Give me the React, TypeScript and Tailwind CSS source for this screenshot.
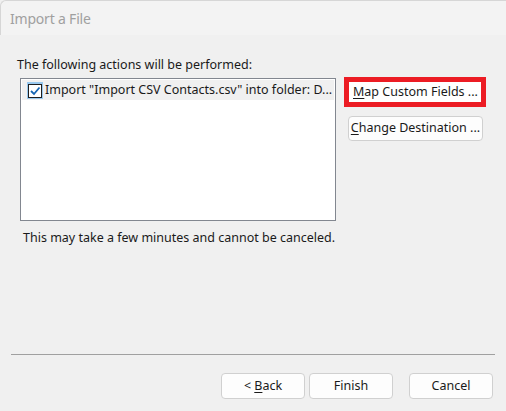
import React from "react";

const font = { fontFamily: '"Noto Sans", "Open Sans", sans-serif' };

function Check() {
  return (
    <svg width="16" height="17" viewBox="0 0 16 17" className="block shrink-0">
      <rect x="0" y="0" width="16" height="17" fill="#99c9ef" />
      <rect x="1.5" y="2.5" width="13" height="13" fill="#ffffff" stroke="#1e1e1e" strokeWidth="1" />
      <path d="M4 9 L7 12 L12.5 5.5" fill="none" stroke="#1565b3" strokeWidth="1.8" />
    </svg>
  );
}

export default function App() {
  return (
    <div
      className="w-[506px] h-[411px] bg-[#f0f0f0] flex flex-col overflow-hidden text-[12.5px] text-[#1a1a1a]"
      style={font}
    >
      <div className="h-[35px] shrink-0 bg-[#f3f3f3] pl-[9px] flex items-center text-[14px] text-[#a0a0a0] tracking-[-0.2px] rounded-tl-[6px] border-t border-l border-[#d6d6d6]">
        Import a File
      </div>
      <div className="flex pl-[17px] mt-[22px]">
        <div className="w-[318px] flex flex-col">
          <div className="h-[16px] leading-[16px] whitespace-nowrap">The following actions will be performed:</div>
          <div className="mt-[5px] ml-[3px] w-[316px] h-[143px] bg-white border border-[#828790] p-[1px]">
            <div className="flex items-center h-[20px] bg-[#f0f0f0]">
              <div className="ml-[5px]">
                <Check />
              </div>
              <span className="ml-[2px] whitespace-nowrap">Import "Import CSV Contacts.csv" into folder: D...</span>
            </div>
          </div>
          <div className="ml-[6px] mt-[9px] h-[16px] leading-[16px] whitespace-nowrap">This may take a few minutes and cannot be canceled.</div>
        </div>
        <div className="ml-[9px] mt-[20px] flex flex-col">
          <div className="w-[142px] h-[30px] border-[5px] border-[#ec1c24] bg-white flex items-center pl-[4px] whitespace-nowrap">
            <span>
              <u className="underline-offset-2">M</u>ap Custom Fields ...
            </span>
          </div>
          <button className="ml-[4px] mt-[9px] w-[135px] h-[25px] bg-[#fdfdfd] border border-[#d0d0d0] rounded-[4px] flex items-center justify-center whitespace-nowrap">
            <span>
              <u className="underline-offset-2">C</u>hange Destination ...
            </span>
          </button>
        </div>
      </div>
      <div className="flex-1" />
      <div className="mx-[11px] h-[1px] bg-[#a0a0a0] shrink-0" />
      <div className="flex mt-[18px] mb-[12px] pr-[13px] justify-end shrink-0">
        <button className="w-[84px] h-[26px] bg-[#fdfdfd] border border-[#d0d0d0] rounded-[4px] flex items-center justify-center">
          <span>
            &lt; <u className="underline-offset-2">B</u>ack
          </span>
        </button>
        <button className="ml-[4px] w-[84px] h-[26px] bg-[#fdfdfd] border border-[#d0d0d0] rounded-[4px] flex items-center justify-center">
          Finish
        </button>
        <button className="ml-[16px] w-[84px] h-[26px] bg-[#fdfdfd] border border-[#d0d0d0] rounded-[4px] flex items-center justify-center">
          Cancel
        </button>
      </div>
    </div>
  );
}
